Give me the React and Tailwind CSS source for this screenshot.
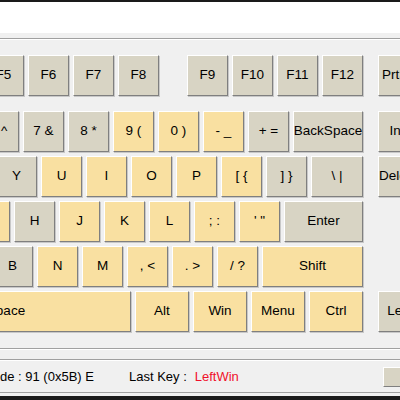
const gray = "bg-[#d8d4c4]";
const yellow = "bg-[#f9e0a1]";

const Key = ({ label, on = false, w = "w-[41px]", className = "" }) => (
  <div
    className={`${w} ${on ? yellow : gray} ${className} shrink-0 h-[41px] flex items-center justify-center whitespace-pre border border-t-white border-l-white border-r-[#7f7f7f] border-b-[#7f7f7f] shadow-[1px_1px_0_#c8c8c8] text-[13.5px] text-black`}
  >
    {label}
  </div>
);

const rows = [
  {
    offset: "-ml-[17px] mt-[15px]",
    keys: [
      { label: "F5" },
      { label: "F6" },
      { label: "F7" },
      { label: "F8" },
      { label: "F9", className: "ml-[24px]" },
      { label: "F10" },
      { label: "F11" },
      { label: "F12" },
      { label: "PrtSc", className: "ml-[11px]" },
    ],
  },
  {
    offset: "-ml-[22px] mt-[15px]",
    keys: [
      { label: "6 ^" },
      { label: "7 &" },
      { label: "8 *" },
      { label: "9 (", on: true },
      { label: "0 )", on: true },
      { label: "- _", on: true },
      { label: "+ =" },
      { label: "BackSpace", w: "w-[70px]" },
      { label: "Ins", className: "ml-[11px]" },
    ],
  },
  {
    offset: "-ml-[4px] mt-[4px]",
    keys: [
      { label: "Y" },
      { label: "U", on: true },
      { label: "I", on: true },
      { label: "O", on: true },
      { label: "P", on: true },
      { label: "[ {", on: true },
      { label: "] }" },
      { label: "\\ |", w: "w-[52px]" },
      { label: "Delete", className: "ml-[11px]" },
    ],
  },
  {
    offset: "-ml-[31px] mt-[4px]",
    keys: [
      { label: "G", on: true },
      { label: "H" },
      { label: "J", on: true },
      { label: "K", on: true },
      { label: "L", on: true },
      { label: "; :", on: true },
      { label: "' \"", on: true },
      { label: "Enter", w: "w-[79px]" },
    ],
  },
  {
    offset: "-ml-[8px] mt-[4px]",
    keys: [
      { label: "B" },
      { label: "N", on: true },
      { label: "M", on: true },
      { label: ", <", on: true },
      { label: ". >", on: true },
      { label: "/ ?", on: true },
      { label: "Shift", on: true, w: "w-[101px]" },
    ],
  },
  {
    offset: "-ml-[119px] mt-[4px]",
    keys: [
      { label: "Space", on: true, w: "w-[250px]" },
      { label: "Alt", on: true, w: "w-[54px]" },
      { label: "Win", on: true, w: "w-[54px]" },
      { label: "Menu", on: true, w: "w-[54px]" },
      { label: "Ctrl", on: true, w: "w-[54px]" },
      { label: "Left", className: "ml-[11px]" },
    ],
  },
];

export default function App() {
  return (
    <div className="w-[400px] h-[400px] overflow-hidden bg-[#f0f0f0] flex flex-col font-['Liberation_Sans',Arial,sans-serif]">
      <div className="h-[2px] bg-[#1a1a1a] shrink-0" />
      <div className="h-[31px] bg-white shrink-0" />
      <div className="h-[5px] shrink-0" />
      <div className="h-px bg-[#a0a0a0] shrink-0" />
      <div className="h-px bg-white shrink-0" />

      {rows.map((row, i) => (
        <div key={i} className={`flex gap-[4px] shrink-0 ${row.offset}`}>
          {row.keys.map((k) => (
            <Key key={k.label} {...k} />
          ))}
        </div>
      ))}

      <div className="mt-[16px] h-px bg-[#a0a0a0] shrink-0" />
      <div className="h-px bg-white shrink-0" />
      <div className="mt-[9px] h-px bg-[#a0a0a0] shrink-0" />
      <div className="h-px bg-white shrink-0" />

      <div className="h-[31px] flex items-center shrink-0 text-[13px] text-black">
        <span className="whitespace-pre">de : 91 (0x5B) E</span>
        <span className="ml-[35px] whitespace-pre">Last Key :</span>
        <span className="ml-[8px] text-[#f0102a]">LeftWin</span>
        <div className="ml-auto -mr-[23px] w-[40px] h-[20px] shrink-0 bg-[#d8d4c4] border border-t-white border-l-white border-r-[#7f7f7f] border-b-[#7f7f7f]" />
      </div>

      <div className="h-px bg-[#a0a0a0] shrink-0" />
      <div className="h-[3px] shrink-0" />
      <div className="flex-1 bg-[#1a1a1a]" />
    </div>
  );
}
